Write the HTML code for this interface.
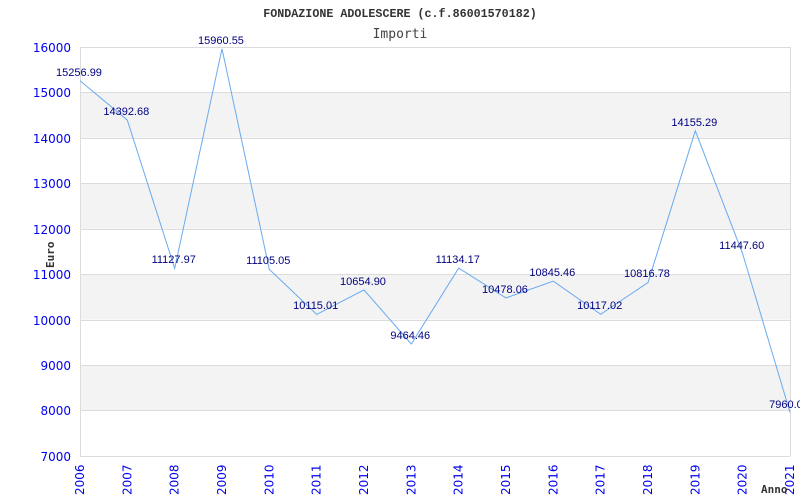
<!DOCTYPE html>
<html><head><meta charset="utf-8"><style>body{margin:0;background:#fff}svg{display:block}</style></head><body>
<svg width="800" height="500" xmlns="http://www.w3.org/2000/svg">
<rect width="800" height="500" fill="#fff"/>
<g fill="#f3f3f3">
<rect x="80" y="92.4" width="710" height="45.4"/>
<rect x="80" y="183.3" width="710" height="45.4"/>
<rect x="80" y="274.2" width="710" height="45.4"/>
<rect x="80" y="365.1" width="710" height="45.4"/>
</g>
<g stroke="#dcdcdc" stroke-width="1">
<line x1="80" y1="47.5" x2="790" y2="47.5"/>
<line x1="80" y1="92.5" x2="790" y2="92.5"/>
<line x1="80" y1="138.5" x2="790" y2="138.5"/>
<line x1="80" y1="183.5" x2="790" y2="183.5"/>
<line x1="80" y1="229.5" x2="790" y2="229.5"/>
<line x1="80" y1="274.5" x2="790" y2="274.5"/>
<line x1="80" y1="320.5" x2="790" y2="320.5"/>
<line x1="80" y1="365.5" x2="790" y2="365.5"/>
<line x1="80" y1="410.5" x2="790" y2="410.5"/>
<line x1="80" y1="456.5" x2="790" y2="456.5"/>
<line x1="80.5" y1="47" x2="80.5" y2="456"/>
<line x1="790.5" y1="47" x2="790.5" y2="456"/>
</g>
<text x="400" y="17" text-anchor="middle" font-family="Liberation Mono, monospace" font-weight="bold" font-size="11.7" fill="#333">FONDAZIONE ADOLESCERE (c.f.86001570182)</text>
<text x="400" y="38" text-anchor="middle" font-family="DejaVu Sans Mono, monospace" font-size="13" fill="#444">Importi</text>
<g font-family="DejaVu Sans, sans-serif" font-size="12" fill="#0000ee" text-anchor="end">
<text x="71" y="52">16000</text><text x="71" y="97">15000</text><text x="71" y="143">14000</text>
<text x="71" y="188">13000</text><text x="71" y="234">12000</text><text x="71" y="279">11000</text>
<text x="71" y="325">10000</text><text x="71" y="370">9000</text><text x="71" y="415">8000</text>
<text x="71" y="461">7000</text>
</g>
<g font-family="DejaVu Sans, sans-serif" font-size="12" fill="#0000ee" text-anchor="start">
<text transform="translate(84,495) rotate(-90)">2006</text>
<text transform="translate(131.3,495) rotate(-90)">2007</text>
<text transform="translate(178.7,495) rotate(-90)">2008</text>
<text transform="translate(226,495) rotate(-90)">2009</text>
<text transform="translate(273.3,495) rotate(-90)">2010</text>
<text transform="translate(320.7,495) rotate(-90)">2011</text>
<text transform="translate(368,495) rotate(-90)">2012</text>
<text transform="translate(415.3,495) rotate(-90)">2013</text>
<text transform="translate(462.7,495) rotate(-90)">2014</text>
<text transform="translate(510,495) rotate(-90)">2015</text>
<text transform="translate(557.3,495) rotate(-90)">2016</text>
<text transform="translate(604.7,495) rotate(-90)">2017</text>
<text transform="translate(652,495) rotate(-90)">2018</text>
<text transform="translate(699.3,495) rotate(-90)">2019</text>
<text transform="translate(746.7,495) rotate(-90)">2020</text>
<text transform="translate(794,495) rotate(-90)">2021</text>
</g>
<text transform="translate(54,268) rotate(-90)" font-family="DejaVu Sans Mono, monospace" font-weight="bold" font-size="11" fill="#333">Euro</text>
<text x="761" y="493" font-family="DejaVu Sans Mono, monospace" font-weight="bold" font-size="11" fill="#333">Anno</text>
<polyline fill="none" stroke="#6aaaf0" stroke-width="1" points="80,80.8 127.3,120.1 174.7,268.4 222,48.8 269.3,269.4 316.7,314.4 364,289.9 411.3,344 458.7,268.1 506,297.9 553.3,281.2 600.7,314.3 648,282.5 695.3,130.8 742.7,253.9 790,412.4"/>
<g font-family="Liberation Sans, sans-serif" font-size="11" fill="#000080" text-anchor="middle">
<text x="79" y="76">15256.99</text>
<text x="126.3" y="115">14392.68</text>
<text x="173.7" y="263">11127.97</text>
<text x="221" y="44">15960.55</text>
<text x="268.3" y="264">11105.05</text>
<text x="315.7" y="309">10115.01</text>
<text x="363" y="285">10654.90</text>
<text x="410.3" y="339">9464.46</text>
<text x="457.7" y="263">11134.17</text>
<text x="505" y="293">10478.06</text>
<text x="552.3" y="276">10845.46</text>
<text x="599.7" y="309">10117.02</text>
<text x="647" y="277">10816.78</text>
<text x="694.3" y="126">14155.29</text>
<text x="741.7" y="249">11447.60</text>
<text x="789" y="408">7960.00</text>
</g>
</svg>
</body></html>
